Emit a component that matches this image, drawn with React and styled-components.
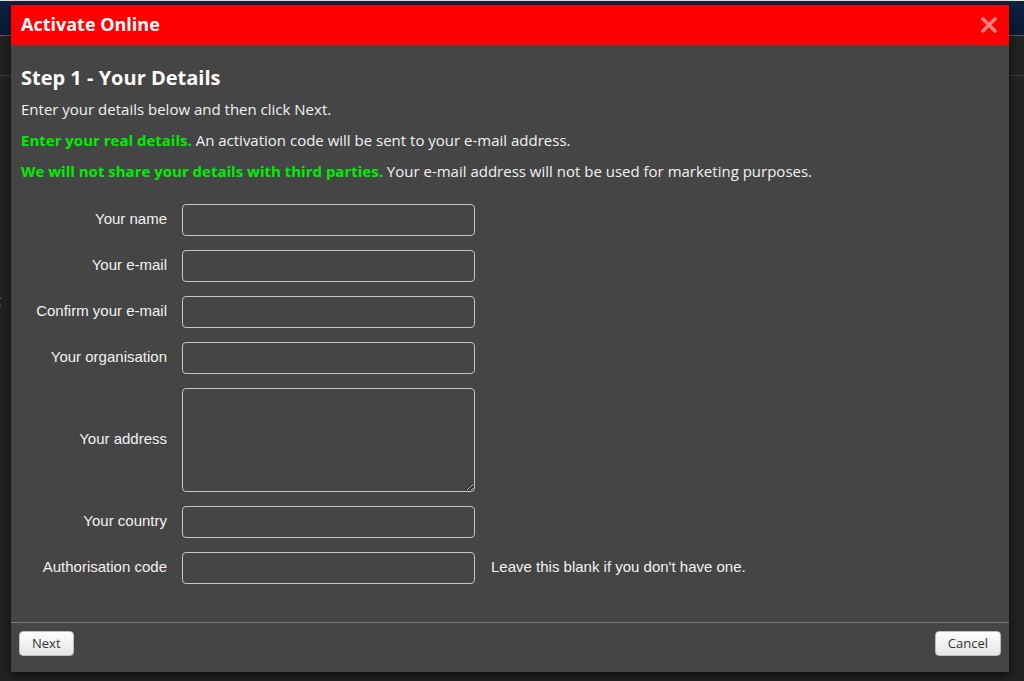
import React from "react";
import styled, { createGlobalStyle } from "styled-components";

const GlobalStyle = createGlobalStyle`
  html, body {
    margin: 0;
    padding: 0;
    background: #222;
  }
  #root {
    height: 681px;
  }
`;

// backdrop page (behind the dialog)
const Page = styled.div`
  position: relative;
  width: 1024px;
  height: 681px;
  overflow: hidden;
  background: #222;
  display: flex;
  flex-direction: column;
`;

const TopBar = styled.div`
  height: 34px;
  border-top: 1px solid #f3dcc0;
  background: linear-gradient(to bottom, #0d2444, #081a33);
  border-bottom: 1px solid #5b5b5b;
`;

const SubBar = styled.div`
  height: 39px;
  border-bottom: 1px solid #3d3d3d;
`;

const PageText = styled.div`
  margin: 214px 0 0 -4px;
  color: #777;
  font: 15px "Open Sans", sans-serif;
`;

// dialog
const Modal = styled.div`
  position: absolute;
  top: 5px;
  left: 11px;
  width: 998px;
  height: 667px;
  background: #454545;
  display: flex;
  flex-direction: column;
  box-shadow: 0 3px 8px rgba(0, 0, 0, 0.6);
  font-family: "Open Sans", sans-serif;
`;

const Header = styled.div`
  height: 40px;
  box-sizing: border-box;
  padding: 0 12px 2px 10px;
  background: #ff0000;
  display: flex;
  align-items: center;
  justify-content: space-between;
`;

const Title = styled.h1`
  margin: 0;
  color: #fff;
  font-size: 18px;
  font-weight: 700;
  line-height: 24px;
`;

const Close = styled.button`
  border: 0;
  background: none;
  padding: 0;
  margin-top: 2px;
  width: 16px;
  height: 16px;
  display: flex;
  cursor: pointer;
`;

const Body = styled.div`
  flex: 1;
  padding: 19px 10px 0 10px;
  border-bottom: 1px solid #777;
`;

const Heading = styled.h2`
  margin: 0 0 7px;
  color: #fff;
  font-size: 20px;
  font-weight: 700;
  line-height: 28px;
`;

const Para = styled.p`
  margin: 0 0 11px;
  color: #f2f2f2;
  font-size: 15px;
  line-height: 20px;
`;

const Strong = styled.strong`
  color: #00ee00;
  font-weight: 700;
`;

const Form = styled.div`
  margin-top: 23px;
  display: grid;
  grid-template-columns: 146px 293px auto;
  column-gap: 15px;
  row-gap: 14px;
  align-items: center;
  font-family: "Liberation Sans", Arial, sans-serif;
  font-size: 15px;
`;

const Label = styled.label`
  color: #f2f2f2;
  text-align: right;
  padding-bottom: 4px;
`;

const Input = styled.input`
  box-sizing: border-box;
  width: 293px;
  height: 32px;
  margin: 0;
  border: 1px solid #c4c4c4;
  border-radius: 4px;
  background: transparent;
  color: #fff;
  padding: 4px 8px;
  font: inherit;
`;

const TextArea = styled.textarea`
  box-sizing: border-box;
  width: 293px;
  height: 104px;
  margin: 0;
  border: 1px solid #c4c4c4;
  border-radius: 4px;
  background: transparent;
  color: #fff;
  padding: 4px 8px;
  font: inherit;
  display: block;
`;

const Hint = styled.span`
  color: #f2f2f2;
  padding: 0 0 4px 1px;
`;

const Footer = styled.div`
  height: 49px;
  display: flex;
  align-items: flex-start;
  justify-content: space-between;
  padding: 8px 8px 0 8px;
  box-sizing: border-box;
`;

const Button = styled.button`
  height: 25px;
  padding: 0 12px 1px;
  border: 1px solid #bdbdbd;
  border-radius: 4px;
  background: linear-gradient(to bottom, #ffffff, #e4e4e4);
  color: #333;
  font: 13px "Open Sans", sans-serif;
  cursor: pointer;
`;

const fields = [
  { label: "Your name" },
  { label: "Your e-mail" },
  { label: "Confirm your e-mail" },
  { label: "Your organisation" },
  { label: "Your address", multi: true },
  { label: "Your country" },
  { label: "Authorisation code", hint: "Leave this blank if you don't have one." },
];

const App = () => {
  return (
    <>
      <GlobalStyle />
      <Page>
        <TopBar />
        <SubBar />
        <PageText>t</PageText>

        <Modal>
          <Header>
            <Title>Activate Online</Title>
            <Close aria-label="Close">
              <svg width="16" height="16" viewBox="0 0 16 16">
                <path
                  d="M2 2 L14 14 M14 2 L2 14"
                  stroke="#ff8080"
                  strokeWidth="3.4"
                  strokeLinecap="square"
                />
              </svg>
            </Close>
          </Header>
          <Body>
            <Heading>Step 1 - Your Details</Heading>
            <Para>Enter your details below and then click Next.</Para>
            <Para>
              <Strong>Enter your real details.</Strong> An activation code will
              be sent to your e-mail address.
            </Para>
            <Para>
              <Strong>We will not share your details with third parties.</Strong>{" "}
              Your e-mail address will not be used for marketing purposes.
            </Para>
            <Form>
              {fields.map((f) => (
                <React.Fragment key={f.label}>
                  <Label>{f.label}</Label>
                  {f.multi ? <TextArea /> : <Input type="text" />}
                  <Hint>{f.hint || ""}</Hint>
                </React.Fragment>
              ))}
            </Form>
          </Body>
          <Footer>
            <Button>Next</Button>
            <Button>Cancel</Button>
          </Footer>
        </Modal>
      </Page>
    </>
  );
};

export default App;
